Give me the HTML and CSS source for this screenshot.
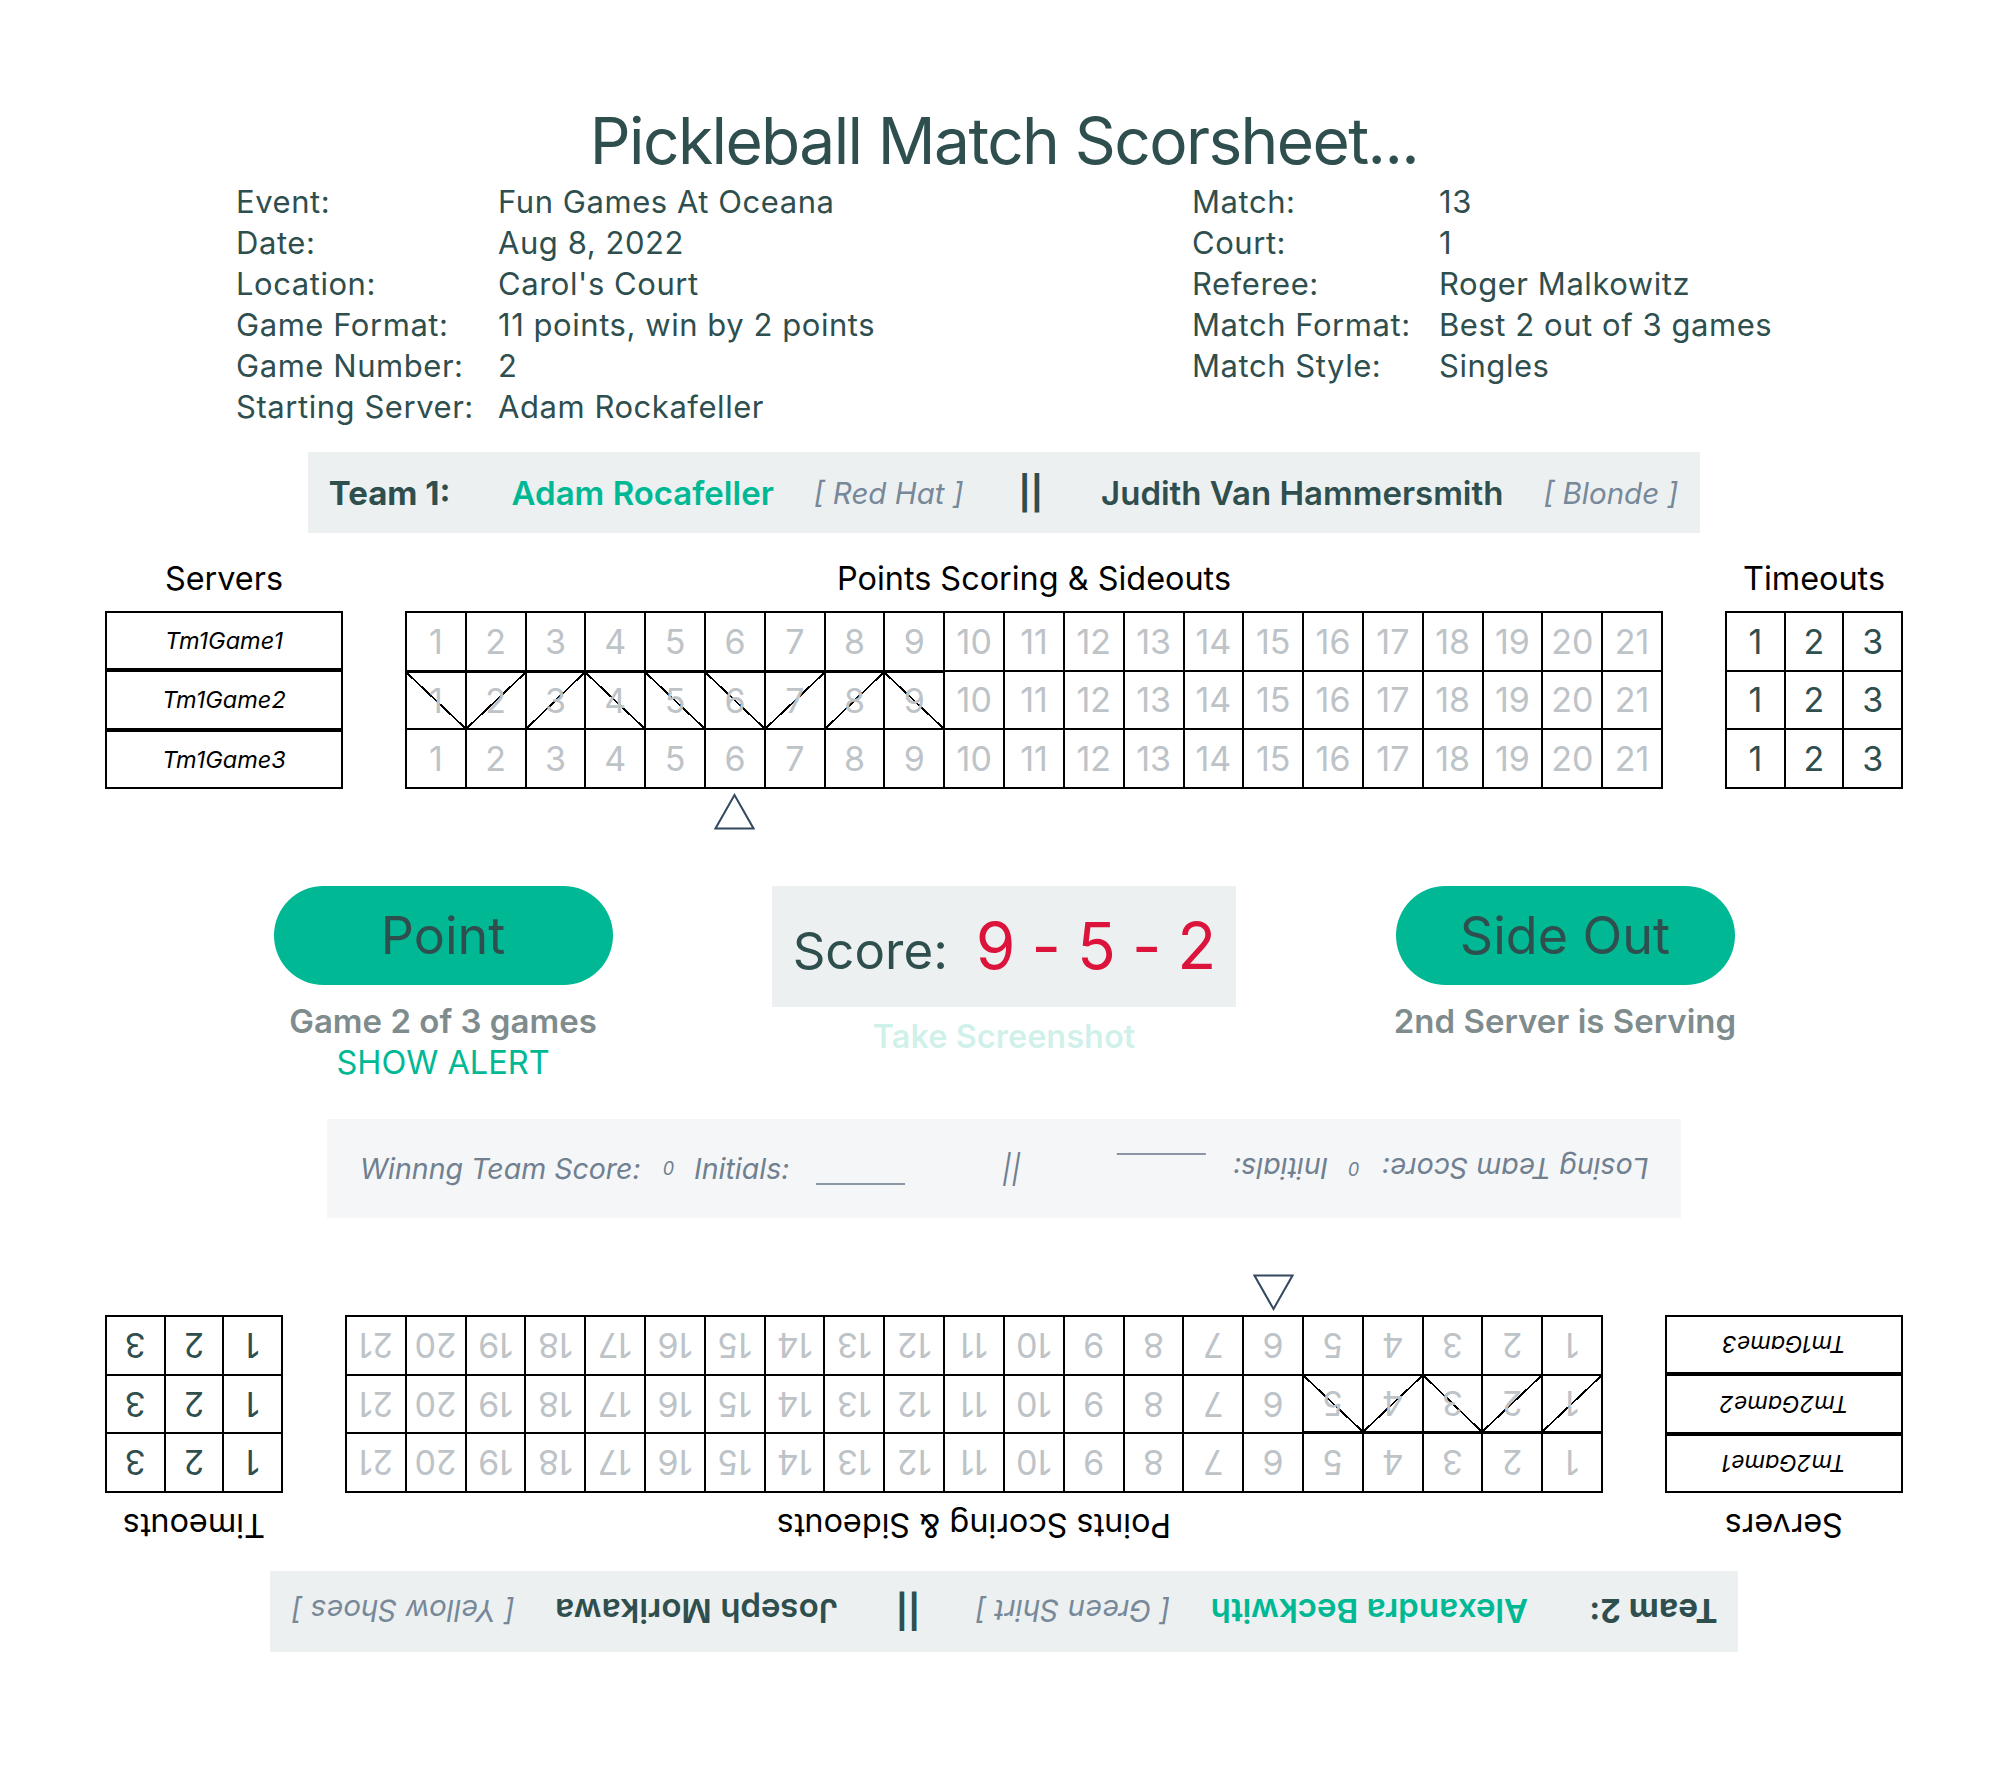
FILE: index.html
```html
<!DOCTYPE html>
<html lang="en">
<head>
<meta charset="utf-8">
<title>Pickleball Match Scorsheet</title>
<link rel="stylesheet" href="styles.css">
</head>
<body>
<div class="page">
  <h1 class="title">Pickleball Match Scorsheet...</h1>

  <div class="info">
    <div class="info-table">
      <div>Event:</div><div>Fun Games At Oceana</div>
      <div>Date:</div><div>Aug 8, 2022</div>
      <div>Location:</div><div>Carol's Court</div>
      <div>Game Format:</div><div>11 points, win by 2 points</div>
      <div>Game Number:</div><div>2</div>
      <div>Starting Server:</div><div>Adam Rockafeller</div>
    </div>
    <div class="info-table right">
      <div>Match:</div><div>13</div>
      <div>Court:</div><div>1</div>
      <div>Referee:</div><div>Roger Malkowitz</div>
      <div>Match Format:</div><div>Best 2 out of 3 games</div>
      <div>Match Style:</div><div>Singles</div>
    </div>
  </div>

  <section class="team">
    <div class="team-bar">
      <span class="team-label">Team 1:</span>
      <span class="player lead">Adam Rocafeller</span>
      <span class="tag">[ Red Hat ]</span>
      <span class="sep">||</span>
      <span class="player">Judith Van Hammersmith</span>
      <span class="tag">[ Blonde ]</span>
    </div>
    <div class="sheet">
      <div class="col">
        <div class="col-head">Servers</div>
        <div class="servers">
          <div class="server">Tm1Game1</div>
          <div class="server">Tm1Game2</div>
          <div class="server">Tm1Game3</div>
        </div>
      </div>
      <div class="col">
        <div class="col-head">Points Scoring &amp; Sideouts</div>
        <div class="points">
          <div class="cell">1</div><div class="cell">2</div><div class="cell">3</div><div class="cell">4</div><div class="cell">5</div><div class="cell">6</div><div class="cell">7</div><div class="cell">8</div><div class="cell">9</div><div class="cell">10</div><div class="cell">11</div><div class="cell">12</div><div class="cell">13</div><div class="cell">14</div><div class="cell">15</div><div class="cell">16</div><div class="cell">17</div><div class="cell">18</div><div class="cell">19</div><div class="cell">20</div><div class="cell">21</div>
          <div class="cell mk bs">1</div><div class="cell mk fs">2</div><div class="cell mk fs">3</div><div class="cell mk bs">4</div><div class="cell mk bs">5</div><div class="cell mk bs">6</div><div class="cell mk fs">7</div><div class="cell mk fs">8</div><div class="cell mk bs">9</div><div class="cell">10</div><div class="cell">11</div><div class="cell">12</div><div class="cell">13</div><div class="cell">14</div><div class="cell">15</div><div class="cell">16</div><div class="cell">17</div><div class="cell">18</div><div class="cell">19</div><div class="cell">20</div><div class="cell">21</div>
          <div class="cell">1</div><div class="cell">2</div><div class="cell">3</div><div class="cell">4</div><div class="cell">5</div><div class="cell">6</div><div class="cell">7</div><div class="cell">8</div><div class="cell">9</div><div class="cell">10</div><div class="cell">11</div><div class="cell">12</div><div class="cell">13</div><div class="cell">14</div><div class="cell">15</div><div class="cell">16</div><div class="cell">17</div><div class="cell">18</div><div class="cell">19</div><div class="cell">20</div><div class="cell">21</div>
        </div>
        <div class="marker-row">
          <svg class="marker" width="41" height="37" viewBox="0 0 41 37"><polygon points="20.5,2 39.5,35.5 1.5,35.5" fill="none" stroke="#34495e" stroke-width="2"/></svg>
        </div>
      </div>
      <div class="col">
        <div class="col-head">Timeouts</div>
        <div class="timeouts">
          <div class="cell">1</div><div class="cell">2</div><div class="cell">3</div>
          <div class="cell">1</div><div class="cell">2</div><div class="cell">3</div>
          <div class="cell">1</div><div class="cell">2</div><div class="cell">3</div>
        </div>
      </div>
    </div>
  </section>

  <section class="actions">
    <div class="action">
      <div class="pill">Point</div>
      <div class="note">Game 2 of 3 games</div>
      <div class="note alert">SHOW ALERT</div>
    </div>
    <div class="action">
      <div class="score-box">
        <div class="score-line">
          <span class="score-label">Score:</span>
          <span class="score-value">9 - 5 - 2</span>
        </div>
      </div>
      <div class="screenshot">Take Screenshot</div>
    </div>
    <div class="action">
      <div class="pill">Side Out</div>
      <div class="note">2nd Server is Serving</div>
    </div>
  </section>

  <div class="result">
    <div class="result-side">
      <span>Winnng Team Score:</span>
      <span class="zero">0</span>
      <span class="initials">Initials:</span>
      <span class="blank"></span>
    </div>
    <span class="result-sep">||</span>
    <div class="result-side flip">
      <span>Losing Team Score:</span>
      <span class="zero">0</span>
      <span class="initials">Initials:</span>
      <span class="blank"></span>
    </div>
  </div>

  <section class="team flipped">
    <div class="team-bar">
      <span class="team-label">Team 2:</span>
      <span class="player lead">Alexandra Beckwith</span>
      <span class="tag">[ Green Shirt ]</span>
      <span class="sep">||</span>
      <span class="player">Joseph Morikawa</span>
      <span class="tag">[ Yellow Shoes ]</span>
    </div>
    <div class="sheet">
      <div class="col">
        <div class="col-head">Servers</div>
        <div class="servers">
          <div class="server">Tm2Game1</div>
          <div class="server">Tm2Game2</div>
          <div class="server">Tm1Game3</div>
        </div>
      </div>
      <div class="col">
        <div class="col-head">Points Scoring &amp; Sideouts</div>
        <div class="points">
          <div class="cell">1</div><div class="cell">2</div><div class="cell">3</div><div class="cell">4</div><div class="cell">5</div><div class="cell">6</div><div class="cell">7</div><div class="cell">8</div><div class="cell">9</div><div class="cell">10</div><div class="cell">11</div><div class="cell">12</div><div class="cell">13</div><div class="cell">14</div><div class="cell">15</div><div class="cell">16</div><div class="cell">17</div><div class="cell">18</div><div class="cell">19</div><div class="cell">20</div><div class="cell">21</div>
          <div class="cell mk fs">1</div><div class="cell mk fs">2</div><div class="cell mk bs">3</div><div class="cell mk fs">4</div><div class="cell mk bs">5</div><div class="cell">6</div><div class="cell">7</div><div class="cell">8</div><div class="cell">9</div><div class="cell">10</div><div class="cell">11</div><div class="cell">12</div><div class="cell">13</div><div class="cell">14</div><div class="cell">15</div><div class="cell">16</div><div class="cell">17</div><div class="cell">18</div><div class="cell">19</div><div class="cell">20</div><div class="cell">21</div>
          <div class="cell">1</div><div class="cell">2</div><div class="cell">3</div><div class="cell">4</div><div class="cell">5</div><div class="cell">6</div><div class="cell">7</div><div class="cell">8</div><div class="cell">9</div><div class="cell">10</div><div class="cell">11</div><div class="cell">12</div><div class="cell">13</div><div class="cell">14</div><div class="cell">15</div><div class="cell">16</div><div class="cell">17</div><div class="cell">18</div><div class="cell">19</div><div class="cell">20</div><div class="cell">21</div>
        </div>
        <div class="marker-row">
          <svg class="marker" width="41" height="37" viewBox="0 0 41 37"><polygon points="20.5,2 39.5,35.5 1.5,35.5" fill="none" stroke="#34495e" stroke-width="2"/></svg>
        </div>
      </div>
      <div class="col">
        <div class="col-head">Timeouts</div>
        <div class="timeouts">
          <div class="cell">1</div><div class="cell">2</div><div class="cell">3</div>
          <div class="cell">1</div><div class="cell">2</div><div class="cell">3</div>
          <div class="cell">1</div><div class="cell">2</div><div class="cell">3</div>
        </div>
      </div>
    </div>
  </section>
</div>
</body>
</html>
```

FILE: styles.css
```css
* { box-sizing: border-box; margin: 0; padding: 0; }

body {
  width: 2008px;
  min-height: 1774px;
  background: #ffffff;
  font-family: Inter, "Noto Sans", "Liberation Sans", sans-serif;
  color: #2f4f4f;
}

.page {
  display: flex;
  flex-direction: column;
}

.title {
  margin-top: 101px;
  font-size: 64px;
  font-weight: 400;
  line-height: 80px;
  letter-spacing: -1.6px;
  text-align: center;
  color: #2f4f4f;
}

.info {
  display: grid;
  grid-template-columns: 956px auto;
  align-items: start;
  padding-left: 236px;
  font-size: 31px;
  line-height: 41px;
  letter-spacing: 0.55px;
  color: #2f4f4f;
}

.info-table {
  display: grid;
  grid-template-columns: 262px auto;
}

.info-table.right {
  grid-template-columns: 247px auto;
}

/* team block */
.team {
  margin-top: 25px;
  display: flex;
  flex-direction: column;
  align-items: center;
}

.team.flipped {
  margin-top: 56px;
  transform: rotate(180deg);
}

.team-bar {
  display: flex;
  align-items: center;
  height: 81px;
  padding: 0 22px 0 21px;
  background: #ecf0f1;
  font-size: 33px;
  font-weight: 600;
  white-space: nowrap;
}

.team-label {
  margin-right: 61px;
  font-weight: 700;
  color: #2f4f4f;
}

.player { color: #2f4f4f; }
.player.lead { color: #00b894; }

.tag {
  margin-left: 40px;
  font-size: 29.5px;
  font-style: italic;
  font-weight: 400;
  color: #778899;
}

.sep {
  margin: 0 58px 0 55px;
  font-weight: 700;
  color: #2f4f4f;
}

.sheet {
  display: flex;
  align-items: flex-start;
  gap: 62px;
  margin-top: 26px;
}

.col {
  display: flex;
  flex-direction: column;
  align-items: center;
}

.col-head {
  font-size: 32.4px;
  line-height: 40px;
  margin-bottom: 12px;
  color: #000;
  white-space: nowrap;
}

.servers {
  width: 238px;
  display: flex;
  flex-direction: column;
}

.server {
  height: 59.33px;
  border: 2px solid #000;
  display: flex;
  align-items: center;
  justify-content: center;
  font-size: 23.5px;
  font-style: italic;
  color: #000;
}

.points {
  width: 1258px;
  height: 178px;
  display: grid;
  grid-template-columns: repeat(21, 1fr);
  grid-template-rows: repeat(3, 1fr);
  border: 1px solid #000;
}

.timeouts {
  width: 178px;
  height: 178px;
  display: grid;
  grid-template-columns: repeat(3, 1fr);
  grid-template-rows: repeat(3, 1fr);
  border: 1px solid #000;
}

.cell {
  border: 1px solid #000;
  display: flex;
  align-items: center;
  justify-content: center;
  font-size: 34px;
  color: #bdc3c7;
}

.timeouts .cell { color: #2f4f4f; }

.cell.mk { border-top-width: 2px; }

.bs {
  background: linear-gradient(to top right, transparent calc(50% - 0.9px), #000 calc(50% - 0.9px), #000 calc(50% + 0.9px), transparent calc(50% + 0.9px));
}

.fs {
  background: linear-gradient(to bottom right, transparent calc(50% - 0.9px), #000 calc(50% - 0.9px), #000 calc(50% + 0.9px), transparent calc(50% + 0.9px));
}

.marker-row {
  width: 1258px;
  height: 37px;
  margin-top: 4px;
  display: grid;
  grid-template-columns: repeat(21, 1fr);
}

.marker {
  grid-column: 6;
  justify-self: center;
  display: block;
}

/* actions */
.actions {
  display: grid;
  grid-template-columns: repeat(3, 561px);
  justify-content: center;
  align-items: start;
  margin-top: 56px;
}

.action {
  display: flex;
  flex-direction: column;
  align-items: center;
}

.pill {
  width: 339px;
  height: 99px;
  border-radius: 50px;
  background: #00b894;
  display: flex;
  align-items: center;
  justify-content: center;
  font-size: 52px;
  color: #2f4f4f;
}

.note {
  font-size: 33px;
  line-height: 41px;
  font-weight: 600;
  color: #7f8c8d;
  text-align: center;
  white-space: nowrap;
}

.pill + .note { margin-top: 16px; }

.note.alert {
  font-size: 32.5px;
  font-weight: 400;
  color: #00b894;
}

.score-box {
  width: 464px;
  height: 121px;
  background: #ecf0f1;
  display: flex;
  align-items: center;
  justify-content: center;
}

.score-line {
  display: flex;
  align-items: baseline;
  gap: 28px;
  margin-top: -2px;
}

.score-label {
  font-size: 51px;
  color: #2f4f4f;
}

.score-value {
  font-size: 64px;
  letter-spacing: -1px;
  color: #dc143c;
}

.screenshot {
  margin-top: 9px;
  font-size: 32.5px;
  line-height: 41px;
  font-weight: 600;
  color: rgba(0, 184, 148, 0.2);
}

/* result bar */
.result {
  align-self: center;
  width: 1354px;
  height: 99px;
  margin-top: 36px;
  padding: 0 32px 0 33px;
  background: #f4f6f7;
  display: flex;
  align-items: center;
  justify-content: space-between;
  font-size: 28.5px;
  font-style: italic;
  color: #708090;
  white-space: nowrap;
}

.result-side {
  display: flex;
  align-items: center;
  height: 36px;
}

.result-side.flip { transform: rotate(180deg); }

.zero {
  margin-left: 22px;
  font-size: 18px;
}

.initials { margin-left: 20px; }

.blank {
  align-self: flex-end;
  width: 89px;
  height: 2px;
  margin-left: 27px;
  margin-bottom: 2px;
  background: #8a96a3;
}
```
